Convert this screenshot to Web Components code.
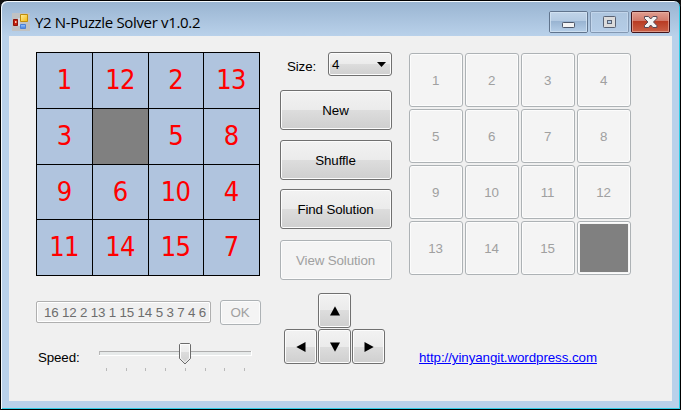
<!DOCTYPE html>
<html lang="en">
<head>
<meta charset="utf-8">
<title>Y2 N-Puzzle Solver v1.0.2</title>
<style>
html,body{margin:0;padding:0;width:681px;height:410px;overflow:hidden;background:#111}
</style>
</head>
<body>
<puzzle-window></puzzle-window>
<script>
const define = (name, html, setup) => customElements.define(name, class extends HTMLElement {
  connectedCallback() {
    if (this.shadowRoot) return;
    const t = document.createElement('template');
    t.innerHTML = html;
    this.attachShadow({mode: 'open'}).appendChild(t.content.cloneNode(true));
    if (setup) setup(this, this.shadowRoot);
  }
});

/* Push button; the size comes from --w and --h */
define('win-button', `<style>
:host{display:flex;box-sizing:border-box;width:var(--w,112px);height:var(--h,40px);border:1px solid #707070;border-radius:3px;
 align-items:center;justify-content:center;box-shadow:inset 0 0 0 1px #fcfcfc;
 background:linear-gradient(#f2f2f2 0,#ebebeb 50%,#dddddd 50%,#cfcfcf 100%);color:#000;white-space:pre;padding:var(--p,1px 1px 0 0)}
:host([disabled]){border-color:#adb2b5;background:#f4f4f4;color:#a0a0a0}
</style><slot></slot>`);

define('arrow-button', `<style>:host{display:block}win-button{--w:33px;--h:35px;--p:0}svg{display:block}</style>
<win-button><svg width="10" height="10" viewBox="0 0 10 10"><path d="M0 9.5 5 .3 10 9.5Z"/></svg></win-button>`,
(el, root) => {
  const turn = {up: 0, right: 90, down: 180, left: 270}[el.getAttribute('dir')];
  root.querySelector('path').setAttribute('transform', `rotate(${turn} 5 5)`);
});

define('puzzle-board', `<style>
:host{display:grid;box-sizing:border-box;width:224px;height:224px;padding:1px;gap:1px;background:#000;
 grid-template-columns:55px 55px 54px 55px;grid-template-rows:55px 55px 54px 55px;
 font:27px/53px "DejaVu Sans Condensed","DejaVu Sans",sans-serif;font-stretch:condensed;letter-spacing:-.8px;color:#f00;text-align:center}
span{background:#b0c4de;overflow:hidden;padding-right:1px}.e{background:#808080}
</style>`, (el, root) => {
  for (const n of el.getAttribute('values').split(' ')) {
    const s = document.createElement('span');
    if (n === '_') s.className = 'e'; else s.textContent = n;
    root.appendChild(s);
  }
});

define('goal-board', `<style>
:host{display:grid;grid-template-columns:repeat(4,54px);gap:2px;letter-spacing:-.2px}
win-button{--w:54px;--h:54px}
win-button:last-child{--p:0}
i{display:block;width:48px;height:48px;background:#808080}
</style>`, (el, root) => {
  for (let n = 1; n <= 16; n++) {
    const b = document.createElement('win-button');
    b.setAttribute('disabled', '');
    if (n < 16) b.textContent = n; else b.appendChild(document.createElement('i'));
    root.appendChild(b);
  }
});

define('win-select', `<style>
:host{display:flex;box-sizing:border-box;width:64px;height:24px;border:1px solid #707070;border-radius:3px;padding:0 5px 0 3px;
 align-items:center;justify-content:space-between;box-shadow:inset 0 0 0 1px #fcfcfc;
 background:linear-gradient(#f2f2f2 0,#ebebeb 50%,#dddddd 50%,#cfcfcf 100%)}
span{padding-top:1px}
</style><span><slot></slot></span><svg width="9" height="5"><path d="M0 0H9L4.5 5Z"/></svg>`);

define('text-field', `<style>
:host{display:block;box-sizing:border-box;width:175px;height:22px;border:1px solid #afafaf;border-radius:2px;box-shadow:inset 0 0 0 1px #fff;
 padding-left:7px;line-height:21px;color:#6d6d6d;white-space:pre;overflow:hidden;letter-spacing:-.17px}
</style><slot></slot>`);

define('speed-slider', `<style>:host{display:block;width:154px;height:30px}svg{display:block}</style>
<svg width="154" height="30" viewBox="0 0 154 30" shape-rendering="crispEdges">
<defs><linearGradient id="g" x2="0" y2="1"><stop stop-color="#f4f4f4"/><stop offset=".42" stop-color="#ebebeb"/><stop offset=".42" stop-color="#dcdcdc"/><stop offset="1" stop-color="#cfcfcf"/></linearGradient></defs>
<path d="M0 8h153v4H0z" fill="#e7eaea"/><path d="M0 8h153v1H0z" fill="#aeaeae"/><path d="M0 8h1v4H0z" fill="#b8b8b8"/><path d="M0 13h153v-1h-153zM152 8h1v4h-1z" fill="#fff"/>
<path d="M7 25h1v3H7zM27 25h1v3h-1zM46 25h1v3h-1zM66 25h1v3h-1zM86 25h1v3h-1zM106 25h1v3h-1zM125 25h1v3h-1zM145 25h1v3h-1z" fill="#b9b9b9"/>
<path shape-rendering="auto" d="M81.500.5h9l1 1v14l-5.500 5.500-5.500-5.500v-14z" fill="url(#g)" stroke="#6b6b6b"/>
<path shape-rendering="auto" d="M81.500 1.500h9v13.600l-4.500 4.500-4.500-4.500z" fill="none" stroke="#fcfcfc"/>
</svg>`);

define('title-bar', `<style>
:host{display:flex;height:34px;align-items:flex-start;padding:0 10px 0 11px}
.ico{margin-top:11px;flex:none}
b{font:15px/20px "Open Sans","Noto Sans",sans-serif;letter-spacing:-.33px;margin:10px auto 0 5px;white-space:pre;color:#000}
nav{display:flex;gap:2px;margin-top:9px}
nav svg{display:block}
</style>
<svg class="ico" width="18" height="18" viewBox="0 0 18 18"><path fill="#c0c2c3" d="M0 0h18v18H0z"/>
<defs><linearGradient id="y" x2="1" y2="1"><stop stop-color="#fff0a0"/><stop offset="1" stop-color="#f5b80c"/></linearGradient>
<linearGradient id="b" x2="0" y2="1"><stop stop-color="#9cc8ff"/><stop offset="1" stop-color="#3d7ce0"/></linearGradient></defs>
<path fill="url(#y)" stroke="#c08c08" d="M8.500 1.500h7v7h-7z"/>
<path fill="#c4200c" stroke="#8d1208" d="M1.500 6.500h4v6h-4z"/><path fill="#f8c0a8" d="M3 8h1.500v2H3z"/>
<path fill="#e8eefa" d="M6.500 5h1v8h-1z"/>
<path fill="url(#b)" stroke="#4c80d4" d="M8.500 11.500h5v4h-5z"/></svg>
<b>Y2 N-Puzzle Solver v1.0.2</b>
<nav>
<svg width="39" height="22" viewBox="0 0 39 22"><defs><linearGradient id="n" x2="0" y2="1"><stop stop-color="#c2d5e9"/><stop offset=".46" stop-color="#b3cae2"/><stop offset=".46" stop-color="#98b3d1"/><stop offset="1" stop-color="#b6cfe9"/></linearGradient></defs>
<rect x=".5" y=".5" width="38" height="21" rx="1.5" fill="url(#n)" stroke="#60748d"/><rect x="1.500" y="1.500" width="36" height="19" fill="none" stroke="#d3e3f3" stroke-opacity=".8"/>
<rect x="13.500" y="11.500" width="12" height="5" rx=".8" fill="#f3f3f3" stroke="#4d5668"/></svg>
<svg width="39" height="22" viewBox="0 0 39 22"><defs><linearGradient id="m" x2="0" y2="1"><stop stop-color="#adc5de"/><stop offset="1" stop-color="#b5cde7"/></linearGradient></defs>
<rect x=".5" y=".5" width="38" height="21" rx="1.5" fill="url(#m)" stroke="#8398b2"/><rect x="1.500" y="1.500" width="36" height="19" fill="none" stroke="#cadcef" stroke-opacity=".7"/>
<rect x="13.500" y="5.500" width="12" height="11" rx=".8" fill="#dcdcdc" stroke="#596273"/><rect x="17.500" y="9.500" width="4" height="3" fill="#b0cae5" stroke="#596273"/></svg>
<svg width="39" height="22" viewBox="0 0 39 22"><defs><linearGradient id="c" x2="0" y2="1"><stop stop-color="#e2a093"/><stop offset=".45" stop-color="#d1796a"/><stop offset=".45" stop-color="#b83a22"/><stop offset="1" stop-color="#cb6249"/></linearGradient></defs>
<rect x=".5" y=".5" width="38" height="21" rx="1.5" fill="url(#c)" stroke="#43141a"/><rect x="1.500" y="1.500" width="36" height="19" fill="none" stroke="#eab5a8" stroke-opacity=".65"/>
<path d="M13.500 5.500h4l2.200 2.500 2.200-2.500h4v2l-3.400 3.500 3.400 3.500v2h-4l-2.200-2.500-2.200 2.500h-4v-2l3.400-3.500-3.400-3.500z" fill="#f3f3f3" stroke="#574753"/></svg>
</nav>`);

define('puzzle-window', `<style>
:host{display:block;box-sizing:border-box;width:681px;height:410px;border:1px solid #000;border-radius:7px 7px 0 0;overflow:hidden;
 background:#b9d1ea linear-gradient(#99b4d1,#b9d1ea) 0 0/100% 35px no-repeat;
 box-shadow:inset 1px 1px 0 #f4f9fd,inset -1px -1px 0 #2fcde6;
 font:13.333px/16px "Liberation Sans",Arial,sans-serif;letter-spacing:-.12px;color:#000}
title-bar{padding-top:1px}
main{display:flex;box-sizing:border-box;width:663px;height:365px;margin-left:8px;background:#f0f0f0;padding-left:27px}
.left{width:225px;padding-top:16px}
.entry{display:flex;gap:9px;margin-top:24px;align-items:flex-start}
.entry text-field{margin-top:1px}
.entry win-button{--w:41px;--h:25px}
.speed{display:flex;margin:18px 0 0 2px;align-items:flex-start}
.speed label{width:61px;margin-top:7px}
.mid{width:112px;margin-left:19px;padding-top:16px}
.size{display:flex;justify-content:space-between;padding-left:7px}
.size label{margin-top:7px}
.acts{display:grid;grid-template-rows:50px 49px 51px 40px;margin-top:14px}
.pad{display:grid;grid-template-columns:repeat(3,33px);gap:1px;margin:13px 0 0 4px}
.pad :first-child{grid-column:2}.pad :nth-child(2){grid-column:1}
.right{margin-left:17px;padding-top:17px}
a{display:block;color:#00f;text-decoration:underline;letter-spacing:-.07px;margin:75px 0 0 10px;white-space:pre}
</style>
<title-bar></title-bar>
<main>
<section class="left">
<puzzle-board values="1 12 2 13 3 _ 5 8 9 6 10 4 11 14 15 7"></puzzle-board>
<div class="entry"><text-field>16 12 2 13 1 15 14 5 3 7 4 6</text-field><win-button disabled>OK</win-button></div>
<div class="speed"><label>Speed:</label><speed-slider></speed-slider></div>
</section>
<section class="mid">
<div class="size"><label>Size:</label><win-select>4</win-select></div>
<div class="acts"><win-button>New</win-button><win-button>Shuffle</win-button><win-button>Find Solution</win-button><win-button disabled>View Solution</win-button></div>
<div class="pad"><arrow-button dir="up"></arrow-button><arrow-button dir="left"></arrow-button><arrow-button dir="down"></arrow-button><arrow-button dir="right"></arrow-button></div>
</section>
<section class="right">
<goal-board></goal-board>
<a>http://yinyangit.wordpress.com</a>
</section>
</main>`);
</script>
</body>
</html>
